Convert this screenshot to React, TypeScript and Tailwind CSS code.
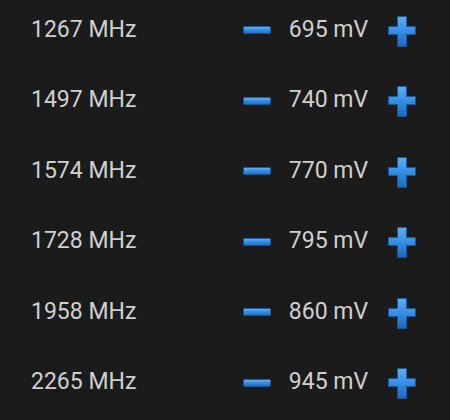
import React from 'react';

// Voltage table: frequency step -> undervolt value with -/+ controls
const rows = [
  { freq: 1267, mv: 695 },
  { freq: 1497, mv: 740 },
  { freq: 1574, mv: 770 },
  { freq: 1728, mv: 795 },
  { freq: 1958, mv: 860 },
  { freq: 2265, mv: 945 },
];

const MinusIcon = ({ id }: { id: string }) => (
  <svg width="28" height="8" viewBox="0 0 28 8">
    <defs>
      <linearGradient id={id} x1="0" y1="0" x2="0" y2="1">
        <stop offset="0" stopColor="#6cb6f5" />
        <stop offset="0.45" stopColor="#3590e6" />
        <stop offset="1" stopColor="#1b6cc4" />
      </linearGradient>
    </defs>
    <rect x="0.5" y="0.5" width="27" height="7" rx="1" fill={`url(#${id})`} stroke="#17589e" strokeWidth="0.8" />
  </svg>
);

const PlusIcon = ({ id }: { id: string }) => (
  <svg width="28" height="31" viewBox="0 0 28 31">
    <defs>
      <linearGradient id={id} x1="0" y1="0" x2="0" y2="1">
        <stop offset="0" stopColor="#5eaef2" />
        <stop offset="0.5" stopColor="#338ee4" />
        <stop offset="1" stopColor="#1a69c0" />
      </linearGradient>
    </defs>
    <path
      d="M9.5 0.5h9v10h9v8h-9v12h-9v-12h-9v-8h9z"
      fill={`url(#${id})`}
      stroke="#17589e"
      strokeWidth="0.8"
      strokeLinejoin="round"
    />
  </svg>
);

export default function App() {
  return (
    <div className="w-[450px] h-[420px] overflow-hidden bg-[#1b1b1b] font-['Roboto',sans-serif] text-[23px] text-[#d0d0d0]">
      <div className="flex flex-col -mt-[6px]">
        {rows.map((r, i) => (
          <div key={r.freq} className="flex items-center h-[70.5px]">
            <span className="pl-[31px] w-[242px] leading-none">{r.freq} MHz</span>
            <button className="flex items-center justify-center w-[30px] h-[30px] mt-[2px]">
              <MinusIcon id={`m${i}`} />
            </button>
            <span className="w-[113px] text-center leading-none">{r.mv} mV</span>
            <button className="ml-[2px] flex items-center justify-center w-[30px] h-[31px] mt-[4px]">
              <PlusIcon id={`p${i}`} />
            </button>
          </div>
        ))}
      </div>
    </div>
  );
}
